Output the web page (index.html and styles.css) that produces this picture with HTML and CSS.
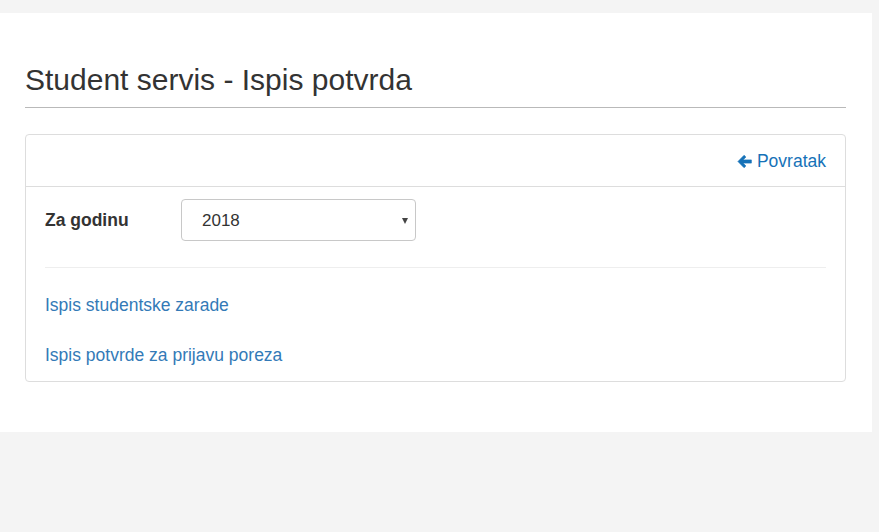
FILE: index.html
```html
<!DOCTYPE html>
<html lang="hr">
<head>
<meta charset="utf-8">
<title>Student servis - Ispis potvrda</title>
<link rel="stylesheet" href="styles.css">
</head>
<body>
<div class="page">
  <div class="page-header">
    <h1 class="title">Student servis - Ispis potvrda</h1>
  </div>
  <div class="panel">
    <div class="panel-heading">
      <a class="back" href="#">
        <svg class="back-icon" width="15" height="15" viewBox="0 0 14 14" aria-hidden="true">
          <path d="M6.6 1.2 L0.9 7 L6.6 12.8 L8.3 11.1 L5.6 8.5 H13.4 V5.5 H5.6 L8.3 2.9 Z" fill="currentColor" stroke="currentColor" stroke-width="0.6" stroke-linejoin="round"/>
        </svg>
        Povratak
      </a>
    </div>
    <div class="panel-body">
      <div class="form-row">
        <label class="form-label" for="year">Za godinu</label>
        <div class="select-wrap">
          <select id="year" class="form-select">
            <option>2018</option>
            <option>2017</option>
            <option>2016</option>
          </select>
        </div>
      </div>
      <hr class="divider">
      <ul class="links">
        <li><a href="#">Ispis studentske zarade</a></li>
        <li><a href="#">Ispis potvrde za prijavu poreza</a></li>
      </ul>
    </div>
  </div>
</div>
</body>
</html>
```

FILE: styles.css
```css
html, body {
  margin: 0;
  padding: 0;
}
body {
  background: #f4f4f4;
  font-family: "Liberation Sans", Arial, sans-serif;
  color: #333;
  font-size: 17px;
}
.page {
  margin-top: 13px;
  width: 872px;
  height: 419px;
  box-sizing: border-box;
  background: #fff;
  padding: 50px 26px 0 25px;
}
.page-header {
  border-bottom: 1px solid #b9b9b9;
  height: 44px;
}
.title {
  margin: 0;
  font-size: 30px;
  font-weight: normal;
  line-height: 34px;
  color: #333;
}
.panel {
  margin-top: 26px;
  border: 1px solid #dddddd;
  border-radius: 4px;
  background: #fff;
}
.panel-heading {
  height: 51px;
  border-bottom: 1px solid #dddddd;
  display: flex;
  align-items: center;
  justify-content: flex-end;
  padding: 0 19px;
}
.back {
  color: #1672b8;
  text-decoration: none;
  display: flex;
  align-items: center;
  gap: 5px;
  font-size: 17.5px;
  margin-top: 1px;
}
.back-icon {
  display: block;
}
.panel-body {
  padding: 12px 19px 0 19px;
}
.form-row {
  display: flex;
  align-items: center;
}
.form-label {
  width: 136px;
  font-weight: bold;
  font-size: 17.5px;
}
.select-wrap {
  position: relative;
  width: 235px;
}
.select-wrap::after {
  content: "";
  position: absolute;
  right: 8px;
  top: 19px;
  border-left: 3.5px solid transparent;
  border-right: 3.5px solid transparent;
  border-top: 6px solid #444;
  pointer-events: none;
}
.form-select {
  -webkit-appearance: none;
  appearance: none;
  width: 235px;
  height: 42px;
  box-sizing: border-box;
  border: 1px solid #c8c8c8;
  border-radius: 4px;
  background: #fff;
  padding: 0 20px;
  font-family: "Liberation Sans", Arial, sans-serif;
  font-size: 17px;
  color: #333;
}
.divider {
  border: 0;
  border-top: 1px solid #eeeeee;
  margin: 26px 0 0 0;
}
.links {
  list-style: none;
  margin: 0;
  padding: 12px 0 1px 0;
}
.links li {
  height: 50px;
  display: flex;
  align-items: center;
}
.links a {
  color: #337ab7;
  text-decoration: none;
  font-size: 17.5px;
}
```
